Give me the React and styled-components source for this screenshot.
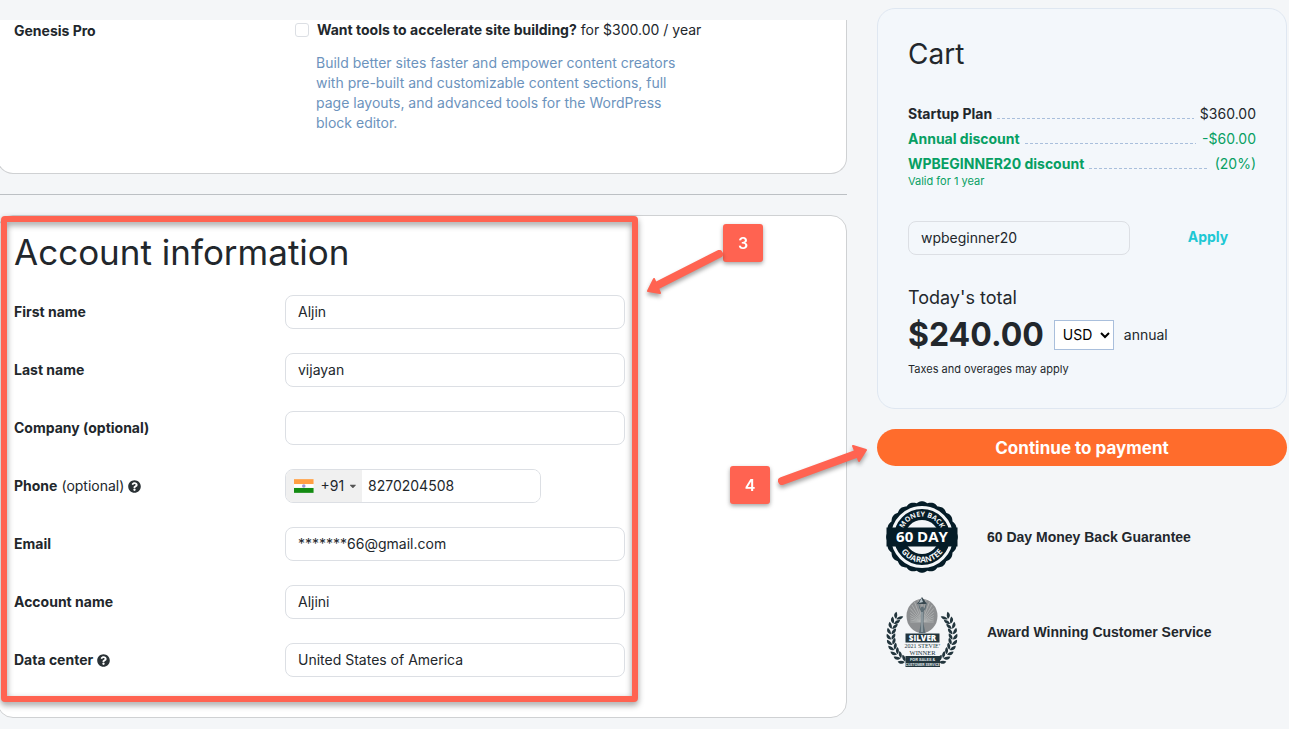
import React, { useState } from "react";
import styled, { createGlobalStyle, ThemeProvider } from 'styled-components';
import { FaQuestionCircle, FaCaretDown } from 'react-icons/fa';

const theme = {
  color: {
    page: '#f4f6f8',
    text: '#22272c',
    blue: '#6c93bd',
    green: '#079f63',
    cyan: '#1ec8d4',
    orange: '#ff6c2c',
    mark: '#ff6351',
    navy: '#051c27',
    slate: '#22353d',
    line: '#cfd1d3',
    field: '#dcdfe4',
  },
};

const GlobalStyle = createGlobalStyle`
  * {
    box-sizing: border-box;
  }
  body {
    margin: 0;
    background: ${theme.color.page};
    color: ${theme.color.text};
    font-family: Inter, sans-serif;
    font-size: 14px;
    line-height: 20px;
  }
  input, select, button {
    font: inherit;
    color: inherit;
  }
`;

const Page = styled.div`
  display: flex;
  align-items: flex-start;
  gap: 30px;
  padding-right: 2px;
  overflow-x: clip;
`;

const Main = styled.main`
  flex: 1;
  min-width: 0;
  margin-left: -3px;
  padding: 20px 0 11px;
`;

const Card = styled.section`
  position: relative;
  background: white;
  border: 1px solid ${props => props.theme.color.line};
  border-radius: 16px;
  padding: 14px 0 40px 16px;
`;

const AddonCard = styled(Card)`
  display: grid;
  grid-template-columns: 281px 1fr;
  min-height: 154px;
  border-top: 0;
  border-radius: 0 0 16px 16px;
  padding: 0 0 40px 16px;
`;

const AddonName = styled.strong`
  padding-top: 1px;
`;

const CheckLabel = styled.label`
  display: flex;
  align-items: center;
  gap: 8px;
`;

const Checkbox = styled.input`
  appearance: none;
  width: 14px;
  height: 14px;
  margin: 0;
  border: 1px solid ${props => props.theme.color.field};
  border-radius: 3px;
  background: white;
`;

const Description = styled.p`
  max-width: 390px;
  margin: 13px 0 0;
  padding-left: 21px;
  color: ${props => props.theme.color.blue};
`;

const Divider = styled.hr`
  height: 1px;
  margin: 20px 0;
  border: 0;
  background: #bcc0c4;
`;

const Form = styled.form`
  position: relative;
  display: grid;
  gap: 24px;
  margin-right: 221px;
`;

const Title = styled.h2`
  margin: 0 0 -3px;
  font-size: 35px;
  font-weight: 400;
  line-height: 44px;
`;

const Row = styled.div`
  display: grid;
  grid-template-columns: 271px 1fr;
  align-items: center;
`;

const Label = styled.label`
  display: flex;
  align-items: center;
  gap: 4px;
  font-weight: 700;
  span {
    font-weight: 400;
  }
  svg {
    font-size: 13px;
    color: #2b3236;
  }
`;

const Input = styled.input`
  width: 100%;
  height: 34px;
  padding: 0 12px 2px;
  border: 1px solid ${props => props.theme.color.field};
  border-radius: 8px;
  background: transparent;
`;

const PhoneBox = styled.div`
  display: flex;
  width: 256px;
  height: 34px;
  border: 1px solid ${props => props.theme.color.field};
  border-radius: 8px;
  overflow: hidden;
`;

const CountryButton = styled.button`
  display: flex;
  align-items: center;
  width: 76px;
  padding: 0 4px 0 8px;
  border: 0;
  background: #f0f0f0;
  svg:first-child {
    margin-right: 7px;
  }
  svg:last-child {
    margin-left: 4px;
    font-size: 10px;
    color: #555;
  }
`;

const PhoneInput = styled.input`
  flex: 1;
  min-width: 0;
  padding: 0 6px;
  border: 0;
`;

const Frame = styled.div`
  position: absolute;
  inset: -14px -13px -25px;
  border: 6px solid ${props => props.theme.color.mark};
  border-radius: 4px;
  filter: drop-shadow(0 3px 3px rgba(0, 0, 0, 0.4));
  pointer-events: none;
`;

const Marker = styled.div`
  position: absolute;
  top: ${props => props.$top}px;
  right: ${props => props.$right}px;
  display: flex;
  align-items: center;
  justify-content: center;
  width: 40px;
  height: 38px;
  border-radius: 3px;
  background: ${props => props.theme.color.mark};
  color: white;
  font-size: 16px;
  font-weight: 600;
  filter: drop-shadow(0 2px 2px rgba(0, 0, 0, 0.35));
`;

const Arrow = styled.svg`
  position: absolute;
  top: ${props => props.$top}px;
  right: ${props => props.$right}px;
  overflow: visible;
  fill: ${props => props.theme.color.mark};
  stroke: ${props => props.theme.color.mark};
  stroke-linecap: round;
  stroke-linejoin: round;
  filter: drop-shadow(0 3px 2px rgba(0, 0, 0, 0.35));
`;

const Aside = styled.aside`
  flex: 0 0 410px;
  padding-top: 8px;
`;

const Cart = styled.section`
  padding: 27px 30px 31px;
  border: 1px solid #dfe7f1;
  border-radius: 18px;
  background: #f3f7fb;
`;

const CartTitle = styled.h2`
  margin: 0 0 29px;
  font-size: 28px;
  font-weight: 400;
  line-height: 36px;
`;

const Item = styled.div`
  display: flex;
  line-height: 25px;
  color: ${props => (props.$discount ? props.theme.color.green : 'inherit')};
`;

const Leader = styled.span`
  flex: 1;
  height: 1px;
  margin: 17px 6px 0 5px;
  background: repeating-linear-gradient(90deg, #a9bfdc 0 3px, transparent 3px 5px);
`;

const Small = styled.p`
  margin: 0;
  font-size: 11px;
  line-height: 16px;
`;

const Validity = styled(Small)`
  margin-top: -3px;
  color: ${props => props.theme.color.green};
`;

const Coupon = styled.form`
  display: grid;
  grid-template-columns: 222px 1fr;
  gap: 30px;
  margin: 32px 0 31px;
`;

const Apply = styled.button`
  padding: 0 0 2px;
  border: 0;
  background: none;
  color: ${props => props.theme.color.cyan};
  font-weight: 700;
`;

const TotalLabel = styled.p`
  margin: 0;
  font-size: 18px;
  line-height: 24px;
`;

const Total = styled.div`
  display: flex;
  align-items: center;
  gap: 10px;
  margin: 4px 0 5px;
`;

const Price = styled.strong`
  font-size: 32px;
  line-height: 42px;
`;

const SelectBox = styled.div`
  position: relative;
  svg {
    position: absolute;
    top: 11px;
    right: 4px;
    pointer-events: none;
  }
`;

const Select = styled.select`
  appearance: none;
  width: 60px;
  height: 30px;
  padding: 0 8px;
  border: 1px solid #a9bfdc;
  border-radius: 0;
  background: white;
  color: black;
`;

const Continue = styled.button`
  width: 100%;
  height: 37px;
  margin: 20px 0 29px;
  border: 0;
  border-radius: 19px;
  background: ${props => props.theme.color.orange};
  color: white;
  font-size: 17px;
  font-weight: 700;
`;

const Perk = styled.div`
  display: flex;
  align-items: center;
  gap: 23px;
  height: 84px;
  margin: 0 0 11px 3px;
  font-family: "Liberation Sans", sans-serif;
  font-weight: 700;
`;

const scallop = () => {
  const points = [];
  for (let i = 0; i <= 240; i++) {
    const a = (i / 240) * Math.PI * 2;
    const r = 34.2 + Math.abs(Math.cos(a * 10)) * 1.6;
    points.push(`${(42 + r * Math.sin(a)).toFixed(2)},${(42 - r * Math.cos(a)).toFixed(2)}`);
  }
  return points.join(' ');
};

const MoneyBackSeal = () => (
  <svg width="84" height="84" viewBox="0 0 84 84" fontFamily="Open Sans" fontWeight="700" textAnchor="middle">
    <defs>
      <path id="sealTop" d="M21.500 42a20.500 20.500 0 0 1 41 0" />
      <path id="sealBottom" d="M16.500 42a25.500 25.500 0 0 0 51 0" />
    </defs>
    <polygon points={scallop()} fill={theme.color.navy} />
    <circle cx="42" cy="42" r="29.500" fill="none" stroke={theme.color.page} strokeWidth="3" />
    <circle cx="42" cy="42" r="17" fill={theme.color.page} />
    <g fill={theme.color.page}>
      <text fontSize="7"><textPath href="#sealTop" startOffset="50%">MONEY BACK</textPath></text>
      <text fontSize="8"><textPath href="#sealBottom" startOffset="50%">GUARANTEE</textPath></text>
    </g>
    <rect x="6.500" y="32.500" width="71" height="19" fill={theme.color.navy} />
    <text x="42" y="47" fill="white" fontSize="15">60 DAY</text>
  </svg>
);

const leaves = Array.from({ length: 10 }, (_, i) => {
  const deg = 142 + i * 10;
  const a = (deg * Math.PI) / 180;
  return { deg, x: 42 + 31 * Math.cos(a), y: 46 - 31 * Math.sin(a) };
});

const Laurel = () => (
  <g fill={theme.color.slate}>
    {leaves.map(leaf => (
      <g key={leaf.deg} transform={`translate(${leaf.x} ${leaf.y}) rotate(${180 - leaf.deg})`}>
        <path d="M0 2.500C-4.500 2-5-1-4-3.500C-1.500-2-.2 0 0 2.500Z" />
        <path d="M.5 2.500C0-1 2-3 4.200-3.800C5-1 3.500 1.500.5 2.500Z" />
      </g>
    ))}
  </g>
);

const StevieBadge = () => (
  <svg width="84" height="84" viewBox="0 0 84 84" textAnchor="middle">
    <ellipse cx="42" cy="26" rx="15.500" ry="17" fill="#8d8f91" />
    <g stroke="#b9bbbc" strokeWidth=".7">
      {Array.from({ length: 19 }, (_, i) => {
        const a = ((i * 10 + 180) * Math.PI) / 180;
        const dx = Math.cos(a);
        const dy = Math.sin(a);
        // distance from the foot of the statuette to the rim of the disc
        const t = Math.min(15 / Math.max(Math.abs(dx), 0.01), 18 + 12 * Math.abs(dy) ** 3);
        return <line key={i} x1="42" y1="32" x2={42 + dx * t * 0.78} y2={32 + dy * t * 0.76} />;
      })}
    </g>
    <path d="M42 7L47 14H37Z" fill="#37474f" />
    <path d="M41.500 8L43 12L39 13Z" fill="#b8c4ca" />
    <path d="M38 13L39.500 19L41 21L40.800 34L39 43H45.500L43.500 34L43.800 21L45.500 19L47 13L46 13L44.500 18L43.500 19A1.500 1.500 0 1 0 41 19L40.200 18L39 13Z" fill="#5e6e76" />
    <path d="M42 22V42" stroke="#cfd6d9" strokeWidth=".8" />
    <Laurel />
    <g transform="translate(84 0) scale(-1 1)"><Laurel /></g>
    <rect x="25.500" y="43.500" width="34" height="9" fill={theme.color.slate} />
    <text x="42.500" y="50.800" fill="white" fontFamily="Open Sans" fontWeight="800" fontSize="8">SILVER</text>
    <g fill={theme.color.slate} fontFamily="Liberation Serif" fontWeight="400">
      <text x="42.500" y="58.300" fontSize="6">2021 STEVIE’</text>
      <text x="42.500" y="64.800" fontSize="6.500">WINNER</text>
    </g>
    <rect x="25.500" y="66" width="34.500" height="11" fill={theme.color.slate} />
    <g fill="#dfe3e5" fontFamily="Roboto" fontWeight="700">
      <text x="42.700" y="70.700" fontSize="4.200">FOR SALES &amp;</text>
      <text x="42.700" y="75.500" fontSize="3.600">CUSTOMER SERVICE</text>
    </g>
  </svg>
);

const IndiaFlag = () => (
  <svg width="20" height="14" viewBox="0 0 20 14">
    <rect width="20" height="14" fill="white" />
    <rect width="20" height="5" fill="#ff9f43" />
    <rect y="9" width="20" height="5" fill="#138b12" />
    <circle cx="10" cy="7" r="1.800" fill="#9c96d3" />
  </svg>
);

const Field = ({ id, label, note, help, value, onChange, children }) => (
  <Row>
    <Label htmlFor={id}>
      {label}
      {note && <span>{note}</span>}
      {help && <FaQuestionCircle />}
    </Label>
    {children || <Input id={id} value={value} onChange={onChange} />}
  </Row>
);

export default () => {
  const [values, setValues] = useState({
    firstName: 'Aljin',
    lastName: 'vijayan',
    company: '',
    phone: '8270204508',
    email: '*******66@gmail.com',
    account: 'Aljini',
    dataCenter: 'United States of America',
    coupon: 'wpbeginner20',
  });

  const bind = (name) => ({
    id: name,
    value: values[name],
    onChange: e => setValues({ ...values, [name]: e.target.value }),
  });

  return (
    <ThemeProvider theme={theme}>
      <GlobalStyle />
      <Page>
        <Main>
          <AddonCard>
            <AddonName>Genesis Pro</AddonName>
            <div>
              <CheckLabel>
                <Checkbox type="checkbox" />
                <span><b>Want tools to accelerate site building?</b> for $300.00 / year</span>
              </CheckLabel>
              <Description>
                Build better sites faster and empower content creators with pre-built and
                customizable content sections, full page layouts, and advanced tools for the
                WordPress block editor.
              </Description>
            </div>
          </AddonCard>
          <Divider />
          <Card>
            <Form onSubmit={e => e.preventDefault()}>
              <Title>Account information</Title>
              <Field label="First name" {...bind('firstName')} />
              <Field label="Last name" {...bind('lastName')} />
              <Field label="Company (optional)" {...bind('company')} />
              <Field id="phone" label="Phone" note="(optional)" help>
                <PhoneBox>
                  <CountryButton type="button">
                    <IndiaFlag />
                    +91
                    <FaCaretDown />
                  </CountryButton>
                  <PhoneInput type="tel" {...bind('phone')} />
                </PhoneBox>
              </Field>
              <Field label="Email" {...bind('email')} />
              <Field label="Account name" {...bind('account')} />
              <Field label="Data center" help {...bind('dataCenter')} />
              <Frame />
            </Form>
            <Marker $top={8} $right={83}>3</Marker>
            <Arrow $top={29} $right={116} width="90" height="55" viewBox="640 245 90 55">
              <path d="M719 254L656 286" fill="none" strokeWidth="8" />
              <path d="M648 291L654 279L660 293Z" strokeWidth="2" />
            </Arrow>
            <Marker $top={250} $right={76}>4</Marker>
            <Arrow $top={224} $right={-26} width="100" height="50" viewBox="772 440 100 50">
              <path d="M782 481L856 454" fill="none" strokeWidth="8" />
              <path d="M866 450L853 446L859 461Z" strokeWidth="2" />
            </Arrow>
          </Card>
        </Main>
        <Aside>
          <Cart>
            <CartTitle>Cart</CartTitle>
            <Item><b>Startup Plan</b><Leader />$360.00</Item>
            <Item $discount><b>Annual discount</b><Leader />-$60.00</Item>
            <Item $discount><b>WPBEGINNER20 discount</b><Leader />(20%)</Item>
            <Validity>Valid for 1 year</Validity>
            <Coupon onSubmit={e => e.preventDefault()}>
              <Input aria-label="Coupon code" {...bind('coupon')} />
              <Apply>Apply</Apply>
            </Coupon>
            <TotalLabel>Today's total</TotalLabel>
            <Total>
              <Price>$240.00</Price>
              <SelectBox>
                <Select aria-label="Currency" defaultValue="USD">
                  <option>USD</option>
                </Select>
                <svg width="10" height="8" viewBox="0 0 10 8">
                  <path d="M1 2L5 6L9 2" fill="none" stroke="black" strokeWidth="2" />
                </svg>
              </SelectBox>
              <span>annual</span>
            </Total>
            <Small>Taxes and overages may apply</Small>
          </Cart>
          <Continue>Continue to payment</Continue>
          <Perk><MoneyBackSeal />60 Day Money Back Guarantee</Perk>
          <Perk><StevieBadge />Award Winning Customer Service</Perk>
        </Aside>
      </Page>
    </ThemeProvider>
  );
};
